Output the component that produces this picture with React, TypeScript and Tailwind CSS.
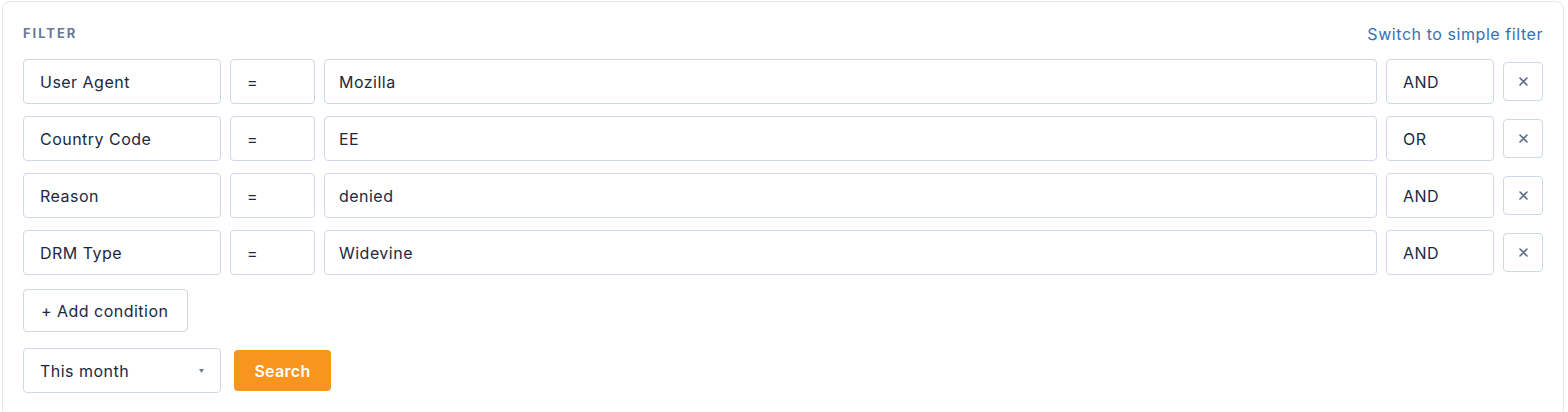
const rows = [
  {field: "User Agent", op: "=", value: "Mozilla", logic: "AND"},
  {field: "Country Code", op: "=", value: "EE", logic: "OR"},
  {field: "Reason", op: "=", value: "denied", logic: "AND"},
  {field: "DRM Type", op: "=", value: "Widevine", logic: "AND"},
]

const box =
  "flex h-[45px] items-center rounded-[4px] border border-[#cfd8e6] bg-white text-[16px] tracking-[0.03em] text-[#1b2843]"

export default function App() {
  return (
    <div className="min-h-screen bg-white pl-[2px] pr-[4px] pt-[1px] font-['Inter','Liberation_Sans',sans-serif]">
      <div className="rounded-[8px] border border-[#e3e8ef] bg-white px-[20px] pb-[24px] pt-[19px]">
        <div className="mb-[12px] flex h-[26px] items-center justify-between">
          <span className="text-[13px] font-bold tracking-[0.15em] text-[#6b7995]">
            FILTER
          </span>
          <a className="text-[16px] tracking-[0.035em] text-[#3572b8]" href="#">
            Switch to simple filter
          </a>
        </div>

        <div className="flex flex-col gap-[12px]">
          {rows.map((r) => (
            <div key={r.field} className="flex items-center gap-[9px]">
              <div className={`${box} w-[198px] px-[16px]`}>{r.field}</div>
              <div className={`${box} w-[85px] px-[16px]`}>{r.op}</div>
              <div className={`${box} flex-1 px-[14px]`}>{r.value}</div>
              <div className={`${box} w-[108px] px-[16px]`}>{r.logic}</div>
              <button className="flex h-[39px] w-[40px] items-center justify-center rounded-[4px] border border-[#cfd8e6] bg-white text-[#5c6b86]">
                <svg width="9" height="9" viewBox="0 0 9 9">
                  <path
                    d="M1 1L8 8M8 1L1 8"
                    stroke="currentColor"
                    strokeWidth="1.6"
                    strokeLinecap="round"
                  />
                </svg>
              </button>
            </div>
          ))}
        </div>

        <button className="mt-[14px] flex h-[43px] w-[165px] items-center rounded-[4px] border border-[#cfd8e6] bg-white px-[17px] text-[16px] tracking-[0.03em] text-[#1b2843]">
          + Add condition
        </button>

        <div className="mt-[16px] flex items-center gap-[13px]">
          <div className={`${box} w-[198px] justify-between pl-[16px] pr-[16px]`}>
            <span>This month</span>
            <svg width="5" height="4" viewBox="0 0 5 4" className="text-[#6b7995]">
              <path d="M0 0H5L2.5 4Z" fill="currentColor" />
            </svg>
          </div>
          <button className="h-[41px] w-[97px] rounded-[4px] bg-[#f7951f] text-[16px] font-semibold tracking-[0.02em] text-white">
            Search
          </button>
        </div>
      </div>
    </div>
  )
}
